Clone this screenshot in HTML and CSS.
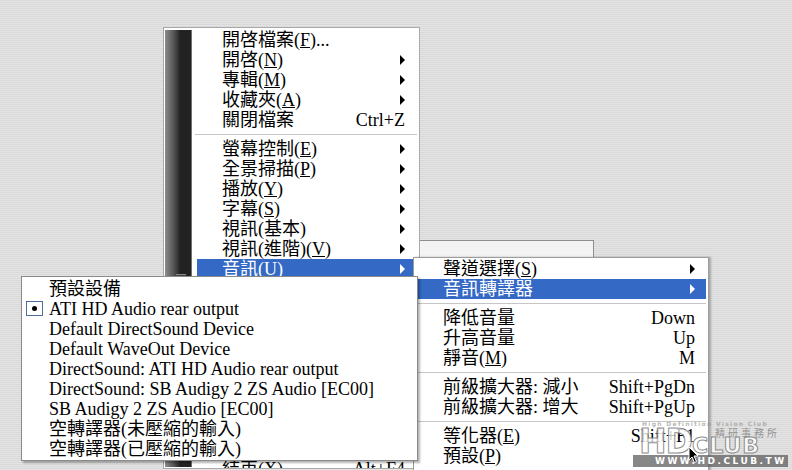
FILE: index.html
```html
<!DOCTYPE html>
<html lang="zh-Hant">
<head>
    <meta charset="UTF-8">
    <title>音訊轉譯器選單</title>
    <link rel="stylesheet" href="styles.css">
</head>
<body>
    <div class="desktop">
        <div class="back-window"></div>

        <!-- main context menu -->
        <div class="menu main-menu">
            <div class="side-strip"><span class="strip-label">Control</span></div>
            <ul class="items">
                <li class="item"><span class="label">開啓檔案(<u>F</u>)...</span></li>
                <li class="item"><span class="label">開啓(<u>N</u>)</span><i class="arrow"></i></li>
                <li class="item"><span class="label">專輯(<u>M</u>)</span><i class="arrow"></i></li>
                <li class="item"><span class="label">收藏夾(<u>A</u>)</span><i class="arrow"></i></li>
                <li class="item"><span class="label">關閉檔案</span><span class="key">Ctrl+Z</span></li>
                <li class="sep"></li>
                <li class="item"><span class="label">螢幕控制(<u>E</u>)</span><i class="arrow"></i></li>
                <li class="item"><span class="label">全景掃描(<u>P</u>)</span><i class="arrow"></i></li>
                <li class="item"><span class="label">播放(<u>Y</u>)</span><i class="arrow"></i></li>
                <li class="item"><span class="label">字幕(<u>S</u>)</span><i class="arrow"></i></li>
                <li class="item"><span class="label">視訊(基本)</span><i class="arrow"></i></li>
                <li class="item"><span class="label">視訊(進階)(<u>V</u>)</span><i class="arrow"></i></li>
                <li class="item active"><span class="label">音訊(<u>U</u>)</span><i class="arrow"></i></li>
                <!-- rows covered by the renderer list -->
                <li class="item covered"><span class="label">擷取(<u>C</u>)</span><i class="arrow"></i></li>
                <li class="item covered"><span class="label">濾鏡(<u>R</u>)</span><i class="arrow"></i></li>
                <li class="item covered"><span class="label">播放清單(<u>L</u>)</span><i class="arrow"></i></li>
                <li class="item covered"><span class="label">控制面板(<u>O</u>)</span><i class="arrow"></i></li>
                <li class="item covered"><span class="label">參數選項(<u>I</u>)</span><i class="arrow"></i></li>
                <li class="item covered"><span class="label">面板(<u>K</u>)</span><i class="arrow"></i></li>
                <li class="item covered"><span class="label">說明(<u>H</u>)</span><i class="arrow"></i></li>
                <li class="item covered"><span class="label">資訊(<u>B</u>)</span><i class="arrow"></i></li>
                <li class="item covered"><span class="label">播放清單(<u>Q</u>)</span><i class="arrow"></i></li>
                <li class="item"><span class="label">結束(<u>X</u>)</span><span class="key">Alt+F4</span></li>
            </ul>
        </div>

        <!-- audio submenu -->
        <div class="menu audio-menu">
            <ul class="items">
                <li class="item"><span class="label">聲道選擇(<u>S</u>)</span><i class="arrow"></i></li>
                <li class="item active"><span class="label">音訊轉譯器</span><i class="arrow"></i></li>
                <li class="sep"></li>
                <li class="item"><span class="label">降低音量</span><span class="key">Down</span></li>
                <li class="item"><span class="label">升高音量</span><span class="key">Up</span></li>
                <li class="item"><span class="label">靜音(<u>M</u>)</span><span class="key">M</span></li>
                <li class="sep"></li>
                <li class="item"><span class="label">前級擴大器: 減小</span><span class="key">Shift+PgDn</span></li>
                <li class="item"><span class="label">前級擴大器: 增大</span><span class="key">Shift+PgUp</span></li>
                <li class="sep"></li>
                <li class="item"><span class="label">等化器(<u>E</u>)</span><span class="key">Shift+F1</span></li>
                <li class="item"><span class="label">預設(<u>P</u>)</span><i class="arrow"></i></li>
            </ul>
        </div>

        <!-- renderer list -->
        <div class="menu renderer-menu">
            <ul class="items">
                <li class="item"><span class="label">預設設備</span></li>
                <li class="item checked"><span class="check"></span><span class="label">ATI HD Audio rear output</span></li>
                <li class="item"><span class="label">Default DirectSound Device</span></li>
                <li class="item"><span class="label">Default WaveOut Device</span></li>
                <li class="item"><span class="label">DirectSound: ATI HD Audio rear output</span></li>
                <li class="item"><span class="label">DirectSound: SB Audigy 2 ZS Audio [EC00]</span></li>
                <li class="item"><span class="label">SB Audigy 2 ZS Audio [EC00]</span></li>
                <li class="item"><span class="label">空轉譯器(未壓縮的輸入)</span></li>
                <li class="item"><span class="label">空轉譯器(已壓縮的輸入)</span></li>
            </ul>
        </div>

        <!-- watermark -->
        <div class="watermark">
            <div class="wm-tag">High Definition Vision Club</div>
            <div class="wm-logo">
                <span class="wm-hd">HD</span><span class="wm-club">CLUB</span>
                <span class="wm-cn">精研事務所</span>
            </div>
            <div class="wm-url">WWW.HD.CLUB.TW</div>
        </div>

        <svg class="cursor" width="12" height="18" viewBox="0 0 12 18">
            <path d="M1 1 L1 14 L4 11 L6.5 16.5 L8.5 15.5 L6 10 L10 10 Z" fill="#000" stroke="#fff" stroke-width="1"/>
        </svg>
    </div>
</body>
</html>
```

FILE: styles.css
```css
body {
    margin: 0;
    font-family: "Liberation Serif", "Noto Sans CJK TC", serif;
    font-size: 18px;
    color: #000;
}
.desktop {
    position: relative;
    width: 792px;
    height: 470px;
    overflow: hidden;
    background: repeating-linear-gradient(to bottom, #d9d9d9 0 1px, #e4e4e4 1px 2px);
}
.back-window {
    position: absolute;
    left: 380px;
    top: 240px;
    width: 212px;
    height: 60px;
    background: #f3f3f3;
    border: 1px solid #8e8e8e;
}

/* menus */
.menu {
    position: absolute;
    background: #fff;
    border: 1px solid #9c9c9c;
    overflow: hidden;
    box-sizing: border-box;
}
.items {
    list-style: none;
    margin: 0;
    padding: 0;
}
.item {
    display: flex;
    align-items: center;
    height: 20px;
    line-height: 20px;
    white-space: nowrap;
}
.item.covered {
    visibility: hidden;
}
.item .label {
    flex: 1;
}
.item .key {
    text-align: right;
}
.item u {
    text-underline-offset: 1px;
}
.item.active {
    background: #3469c6;
    color: #fff;
}
.arrow {
    width: 0;
    height: 0;
    border-left: 5px solid #000;
    border-top: 5px solid transparent;
    border-bottom: 5px solid transparent;
    margin-left: 8px;
}
.item.active .arrow {
    border-left-color: #fff;
}
.sep {
    height: 9px;
    position: relative;
}
.sep::after {
    content: "";
    position: absolute;
    left: 0;
    right: 0;
    top: 4px;
    border-top: 1px solid #c6c6c6;
}

/* main menu */
.main-menu {
    left: 163px;
    top: 27px;
    width: 257px;
    height: 442px;
    padding: 1px;
    display: flex;
    border-color: #a9a9a9;
}
.side-strip {
    position: relative;
    width: 27px;
    flex: none;
    margin-top: 1px;
    background: linear-gradient(to right, #8c8c8c 0, #5a5a5a 8px, #2c2c2c 14px, #222 15px, #222 26px, #707070 26px);
    overflow: hidden;
}
.strip-label {
    position: absolute;
    left: 11px;
    top: 290px;
    transform: rotate(-90deg);
    transform-origin: 0 0;
    font-family: "DejaVu Sans", sans-serif;
    font-size: 13px;
    line-height: 11px;
    color: #8a8a8a;
    white-space: nowrap;
}
.main-menu .items {
    flex: 1;
    padding: 1px 1px 0 5px;
}
.main-menu .sep {
    margin-left: -2px;
}
.main-menu .item {
    padding: 0 12px 0 25px;
}

/* audio submenu */
.audio-menu {
    left: 413px;
    top: 257px;
    width: 296px;
    height: 230px;
    padding: 1px 2px 1px 2px;
    box-shadow: 2px 0 2px rgba(0, 0, 0, 0.25);
}
.audio-menu .item {
    padding: 0 11px 0 27px;
}

/* renderer list */
.renderer-menu {
    left: 21px;
    top: 276px;
    width: 397px;
    height: 185px;
    padding: 2px 2px 0 2px;
    border-color: #8a8a8a;
    box-shadow: 2px 2px 2px rgba(0, 0, 0, 0.3);
}
.renderer-menu .item {
    position: relative;
    padding-left: 25px;
}
.check {
    position: absolute;
    left: 2px;
    top: 2px;
    width: 17px;
    height: 15px;
    border: 1px solid #4c6d9e;
    box-sizing: border-box;
}
.check::after {
    content: "";
    position: absolute;
    left: 5px;
    top: 4px;
    width: 5px;
    height: 5px;
    border-radius: 50%;
    background: #000;
}

/* watermark */
.watermark {
    position: absolute;
    left: 633px;
    top: 420px;
    width: 155px;
    font-family: "DejaVu Sans", sans-serif;
}
.wm-tag {
    font-size: 6px;
    font-weight: bold;
    letter-spacing: 1.3px;
    color: rgba(150, 150, 150, 0.7);
    padding-left: 9px;
    line-height: 8px;
    white-space: nowrap;
}
.wm-logo {
    position: relative;
    height: 27px;
    padding-left: 6px;
    line-height: 27px;
    white-space: nowrap;
}
.wm-hd,
.wm-club {
    font-weight: bold;
    color: rgba(255, 255, 255, 0.75);
    -webkit-text-stroke: 1px rgba(120, 120, 120, 0.85);
    vertical-align: -3px;
}
.wm-hd {
    font-size: 33px;
    letter-spacing: -1px;
}
.wm-club {
    font-size: 22px;
    letter-spacing: 1px;
}
.wm-cn {
    position: absolute;
    left: 82px;
    top: 0;
    font-family: "Noto Sans CJK TC", sans-serif;
    font-size: 10px;
    line-height: 10px;
    letter-spacing: 3px;
    color: rgba(120, 120, 120, 0.75);
}
.wm-url {
    background: rgba(95, 95, 95, 0.75);
    color: #fff;
    font-size: 9px;
    font-weight: bold;
    letter-spacing: 2.5px;
    line-height: 12px;
    padding-left: 22px;
    white-space: nowrap;
}
.cursor {
    position: absolute;
    left: 688px;
    top: 446px;
}
```
